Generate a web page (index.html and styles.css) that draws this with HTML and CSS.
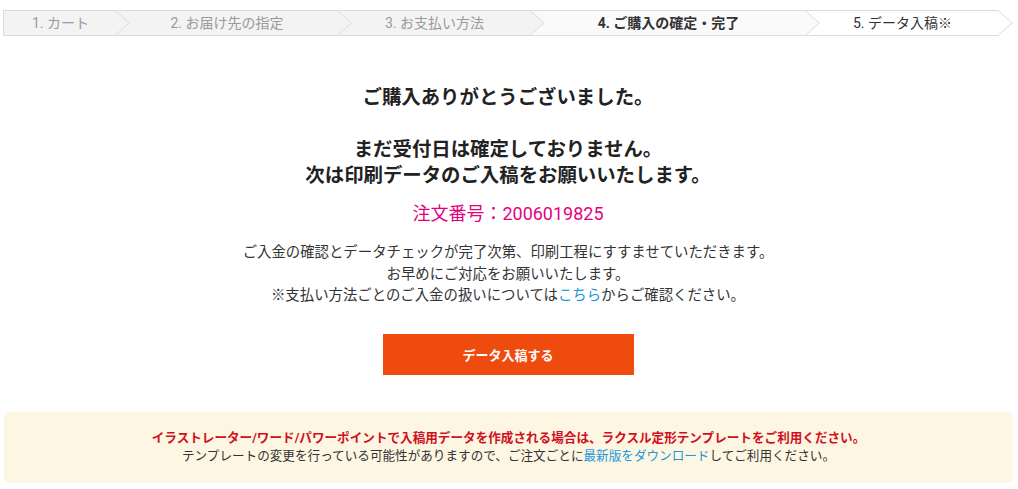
FILE: index.html
```html
<!DOCTYPE html>
<html>
<head>
  <meta charset="utf-8">
  <link rel="stylesheet" href="styles.css">
</head>
<body>
  <div class="page">
    <div class="steps">
      <div class="step done step-1">
        <span>1. カート</span>
        <svg class="chev" viewBox="0 0 15 26"><path class="chev-fill" d="M0 0 L15 13 L0 26 Z"/><path class="chev-line" d="M0 0.5 L14.3 13 L0 25.5"/></svg>
      </div>
      <div class="step done step-2">
        <span>2. お届け先の指定</span>
        <svg class="chev" viewBox="0 0 15 26"><path class="chev-fill" d="M0 0 L15 13 L0 26 Z"/><path class="chev-line" d="M0 0.5 L14.3 13 L0 25.5"/></svg>
      </div>
      <div class="step done step-3">
        <span>3. お支払い方法</span>
        <svg class="chev" viewBox="0 0 15 26"><path class="chev-fill" d="M0 0 L15 13 L0 26 Z"/><path class="chev-line" d="M0 0.5 L14.3 13 L0 25.5"/></svg>
      </div>
      <div class="step current step-4">
        <span>4. ご購入の確定・完了</span>
        <svg class="chev" viewBox="0 0 15 26"><path class="chev-fill" d="M0 0 L15 13 L0 26 Z"/><path class="chev-line" d="M0 0.5 L14.3 13 L0 25.5"/></svg>
      </div>
      <div class="step next step-5">
        <span>5. データ入稿※</span>
        <svg class="chev" viewBox="0 0 15 26"><path class="chev-fill" d="M0 0 L15 13 L0 26 Z"/><path class="chev-line" d="M0 0.5 L14.3 13 L0 25.5"/></svg>
      </div>
    </div>

    <div class="thanks">
      <h1 class="thanks-title">ご購入ありがとうございました。<br><br>まだ受付日は確定しておりません。<br>次は印刷データのご入稿をお願いいたします。</h1>
      <p class="order-no">注文番号：2006019825</p>
      <p class="thanks-text">
        ご入金の確認とデータチェックが完了次第、印刷工程にすすませていただきます。<br>
        お早めにご対応をお願いいたします。<br>
        ※支払い方法ごとのご入金の扱いについては<a href="#">こちら</a>からご確認ください。
      </p>
      <a class="upload-btn" href="#">データ入稿する</a>
    </div>

    <div class="notice">
      <p class="notice-strong">イラストレーター/ワード/パワーポイントで入稿用データを作成される場合は、ラクスル定形テンプレートをご利用ください。</p>
      <p class="notice-text">テンプレートの変更を行っている可能性がありますので、ご注文ごとに<a href="#">最新版をダウンロード</a>してご利用ください。</p>
    </div>
  </div>
</body>
</html>
```

FILE: styles.css
```css
* {
  box-sizing: border-box;
  margin: 0;
  padding: 0;
}

body {
  font-family: Roboto, "Noto Sans CJK JP", sans-serif;
  background: #fff;
  color: #333;
}

a {
  color: #1b96dc;
  text-decoration: none;
}

.page {
  padding: 10px 5px 0 3px;
}

/* stepper */
.steps {
  display: flex;
  height: 26px;
}

.step {
  position: relative;
  display: flex;
  align-items: center;
  justify-content: center;
  border-top: 1px solid #dcdcdc;
  border-bottom: 1px solid #dcdcdc;
  font-size: 14px;
  line-height: 1;
}

.step-1 { width: 112px; border-left: 1px solid #dcdcdc; }
.step-2 { width: 222px; }
.step-3 { width: 193px; }
.step-4 { width: 275px; }
.step-5 { width: 193px; }

.step span {
  padding-left: 2px;
}

.step.done {
  background: #f3f3f3;
  color: #9a9a9a;
}

.step.current {
  background: #fafafa;
  color: #333;
  font-weight: bold;
}

.step.next {
  background: #fff;
  color: #333;
}

.chev {
  position: absolute;
  top: -1px;
  right: -15px;
  width: 15px;
  height: 26px;
  z-index: 1;
}

.chev-line {
  fill: none;
  stroke: #dcdcdc;
  stroke-width: 1;
}

.done .chev-fill { fill: #f3f3f3; }
.current .chev-fill { fill: #fafafa; }
.next .chev-fill { fill: #fff; }

/* thanks block */
.thanks {
  display: flex;
  flex-direction: column;
  align-items: center;
  text-align: center;
  padding-top: 49px;
}

.thanks-title {
  font-size: 19.4px;
  line-height: 26px;
  font-weight: bold;
  color: #222;
}

.order-no {
  margin-top: 13px;
  font-size: 18px;
  line-height: 24px;
  color: #e4007f;
}

.thanks-text {
  margin-top: 16px;
  font-size: 14.4px;
  line-height: 21.5px;
  color: #333;
}

.upload-btn {
  margin-top: 27px;
  width: 251px;
  height: 41px;
  display: flex;
  align-items: center;
  justify-content: center;
  background: #ef4b0f;
  color: #fff;
  font-size: 13px;
  font-weight: bold;
}

/* notice */
.notice {
  margin: 37px 0 0 1px;
  height: 71px;
  padding-top: 17px;
  background: #fdf6e3;
  border-radius: 5px;
  text-align: center;
  font-size: 12.6px;
  line-height: 18px;
}

.notice-strong {
  color: #d0101e;
  font-weight: bold;
}

.notice-text {
  color: #333;
}
```
